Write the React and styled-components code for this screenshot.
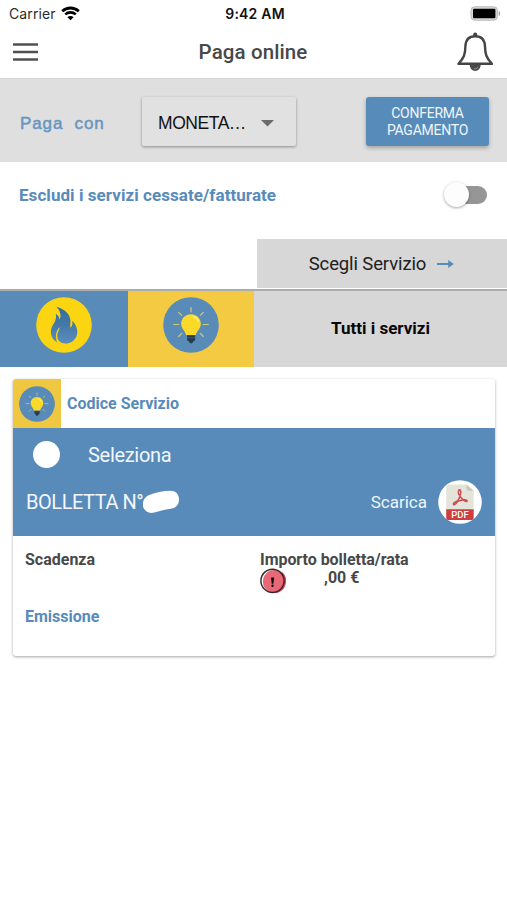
import { useState } from "react";
import styled, { createGlobalStyle } from "styled-components";

const GlobalStyle = createGlobalStyle`
  * {
    box-sizing: border-box;
  }
  body {
    margin: 0;
    background: #fff;
    font-family: Roboto, sans-serif;
  }
  button {
    border: none;
    padding: 0;
    background: none;
    font-family: inherit;
    cursor: pointer;
  }
  svg {
    display: block;
  }
`;

const Page = styled.div`
  width: 507px;
  height: 900px;
  overflow: hidden;
  background: #fff;
`;
const Label = styled.span`
  font-family: ${(p) => p.$font || "Roboto"}, sans-serif;
  font-size: ${(p) => p.$size}px;
  font-weight: ${(p) => p.$weight || 400};
  color: ${(p) => p.$color || "#484848"};
  letter-spacing: ${(p) => p.$spacing || 0}px;
  line-height: 20px;
  white-space: pre;
`;

const StatusBar = styled.div`
  display: grid;
  grid-template-columns: 1fr auto 1fr;
  align-items: center;
  height: 27px;
  padding: 0 6px 0 9px;
`;
const Carrier = styled.div`
  display: flex;
  align-items: center;
  gap: 5px;
`;
const BatterySlot = styled.div`
  display: flex;
  justify-content: flex-end;
`;

const Header = styled.header`
  display: grid;
  grid-template-columns: 1fr auto 1fr;
  align-items: center;
  height: 51px;
  padding: 0 14px 2px 13px;
`;
const BellButton = styled.button`
  justify-self: end;
`;

const PayBar = styled.div`
  display: flex;
  align-items: center;
  height: 84px;
  padding: 2px 18px 0 20px;
  background: #dfdfdf;
  border-top: 1px solid #d6d6d6;
`;
const PayLabel = styled.div`
  width: 122px;
  padding-top: 4px;
  -webkit-text-stroke: 0.5px #6796c3;
`;
const Select = styled.button`
  display: flex;
  align-items: center;
  justify-content: space-between;
  width: 154px;
  height: 49px;
  padding: 3px 22px 0 16px;
  border-radius: 2px;
  background: #e1e1e1;
  box-shadow: 0 1px 3px rgba(0, 0, 0, 0.38);
`;
const ConfirmButton = styled.button`
  width: 123px;
  height: 49px;
  margin-left: auto;
  border-radius: 3px;
  background: #578bba;
  color: #f0f6fc;
  font-size: 14px;
  line-height: 17px;
  letter-spacing: -0.25px;
  box-shadow: 0 2px 4px rgba(0, 0, 0, 0.28);
`;

const FilterRow = styled.div`
  display: flex;
  align-items: center;
  justify-content: space-between;
  height: 77px;
  padding: 0 20px 12px 19px;
`;
const Toggle = styled.button`
  display: flex;
  align-items: center;
  justify-content: ${(p) => (p.$on ? "flex-end" : "flex-start")};
  width: 43px;
  height: 18px;
  border-radius: 9px;
  background: linear-gradient(90deg, transparent 12px, #969696 12px);
`;
const Knob = styled.span`
  flex: none;
  width: 25px;
  height: 25px;
  border-radius: 50%;
  background: #fdfdfd;
  box-shadow: 0 1px 3px rgba(0, 0, 0, 0.35);
`;

const ChooseService = styled.button`
  display: flex;
  align-items: center;
  justify-content: center;
  gap: 11px;
  width: 250px;
  height: 49px;
  margin-left: auto;
  padding-right: 1px;
  background: #d7d7d7;
`;
const Tabs = styled.div`
  display: grid;
  grid-template-columns: 128px 126px 1fr;
  height: 78px;
  margin-top: 1px;
  border-top: 2px solid #acacac;
`;
const Tab = styled.button`
  display: flex;
  align-items: center;
  justify-content: center;
  padding-bottom: ${(p) => (p.$icon ? 8 : 2)}px;
  background: ${(p) => p.$bg};
`;

const Card = styled.section`
  width: 482px;
  height: 277px;
  margin: 12px 0 0 13px;
  border-radius: 3px;
  background: #fff;
  box-shadow: 0 1px 3px rgba(0, 0, 0, 0.36);
  overflow: hidden;
`;
const CardHead = styled.div`
  display: flex;
  align-items: center;
  height: 49px;
  gap: 6px;
`;
const ServiceBadge = styled.div`
  display: flex;
  align-items: center;
  justify-content: center;
  width: 48px;
  height: 49px;
  background: #f0c741;
`;
const BillPanel = styled.div`
  height: 108px;
  padding: 13px 13px 0;
  background: #588bb9;
`;
const SelectRow = styled.div`
  display: flex;
  align-items: center;
  gap: 28px;
  height: 27px;
  padding-left: 7px;
`;
const Radio = styled.button`
  width: 27px;
  height: 27px;
  border-radius: 50%;
  background: ${(p) => (p.$checked ? "#f3c843" : "#fff")};
`;
const BillRow = styled.div`
  display: flex;
  align-items: center;
  justify-content: space-between;
  height: 46px;
  margin-top: 11px;
`;
const BillNumber = styled.div`
  display: flex;
  align-items: center;
`;
const Download = styled.button`
  display: flex;
  align-items: center;
  gap: 11px;
`;
const Details = styled.div`
  display: grid;
  grid-template-columns: 235px 1fr;
  grid-template-rows: 57px 20px;
  padding: 14px 12px;
`;
const Amount = styled.div`
  display: flex;
  flex-direction: column;
`;
const AmountRow = styled.div`
  display: flex;
  align-items: flex-start;
  gap: 36px;
  margin-top: -2px;
`;

const WifiIcon = () => (
  <svg width="19" height="15" viewBox="0 0 19 15" fill="none" stroke="#000">
    <path d="M1.2 5.2C5.9 .9 13.1 .9 17.8 5.2" strokeWidth="2.8" />
    <path d="M4.2 8.4c3-2.7 7.6-2.7 10.6 0" strokeWidth="2.6" />
    <path d="M9.5 14.2 6.4 11.2c1.8-1.6 4.4-1.6 6.2 0z" fill="#000" stroke="none" />
  </svg>
);

const BatteryIcon = () => (
  <svg width="31" height="15" viewBox="0 0 31 15">
    <rect x="1" y=".8" width="26.4" height="13.4" rx="3.6" fill="#d9d9d9" stroke="#b9b9b9" />
    <rect x="3" y="2.8" width="22.4" height="9.4" rx="1" fill="#000" />
    <path d="M28.7 5c2.2.6 2.2 4.4 0 5z" fill="#aaa" />
  </svg>
);

const MenuIcon = () => (
  <svg width="25" height="19" viewBox="0 0 25 19" stroke="#505050" strokeWidth="2.4">
    <path d="M0 2.5h25M0 10h25M0 17.5h25" />
  </svg>
);

const BellIcon = () => (
  <svg width="36" height="40" viewBox="0 0 36 40">
    <path d="M12.7 33h11a5.5 6 0 0 1-11 0z" fill="#4a4a4a" />
    <path d="M17 36.8c1.8.4 3.4-.5 4-1.9" fill="none" stroke="#aaa" strokeWidth=".8" />
    <circle cx="18.2" cy="2.7" r="2.1" fill="#454545" />
    <path
      d="M18.2 4.2C11.6 4.2 8.6 8.6 8.4 14.4C8.2 22.4 7.2 25.6 1.5 31.8H34.9C29.2 25.6 28.2 22.4 28 14.4C27.8 8.6 24.8 4.2 18.2 4.2z"
      fill="#fff"
      stroke="#454545"
      strokeWidth="2.4"
      strokeLinejoin="round"
    />
  </svg>
);

const FlameIcon = () => (
  <svg width="56" height="56" viewBox="0 0 57 57">
    <defs>
      <linearGradient id="flame" x1="0" y1="0" x2="0" y2="1">
        <stop offset="0" stopColor="#356b9c" />
        <stop offset=".5" stopColor="#4479aa" />
        <stop offset="1" stopColor="#5a8ebe" />
      </linearGradient>
    </defs>
    <circle cx="28.5" cy="28.5" r="28.3" fill="#fbd512" />
    <path
      d="M20.7 10C29 12.2 35.3 18 35.1 24.5C35 27.4 34.4 29.4 35.3 31.2C37 29.5 37.7 27 36.7 24.2C40.6 27.5 42.7 33 41.8 38C40.5 44 35.4 48 29.7 47.4C24 47 21.2 43.6 21.7 38.5C22 35.3 23.8 33.7 24.1 30.7C20.3 34 19.2 40.5 21.6 46.4C16.8 43.5 14.1 38 15.5 32.6C16.8 27.2 21.7 24.4 20.1 17C22.5 18.6 23.7 20.5 24.1 23C26 19 24.8 14 20.7 10z"
      fill="url(#flame)"
    />
  </svg>
);

const BulbIcon = ({ size }) => (
  <svg width={size} height={size} viewBox="0 0 57 57">
    <circle cx="28.5" cy="28.5" r="28.3" fill="#588bb8" />
    <path
      d="M28.5 10.5v5M15.6 15.4l3.7 3.5M41.4 15.4l-3.7 3.5M10.5 28h6M40.5 28h6M15.6 40.5l4-4M41.4 40.5l-4-4"
      stroke="#d5ca73"
      strokeWidth="1.2"
    />
    <path d="M24.5 39h8.2v4.2c0 1.2-.9 1.5-1.9 1.8c0 2.8-4.4 2.8-4.4 0c-1-.3-1.9-.6-1.9-1.8z" fill="#263c50" />
    <path d="M24.5 41.4h8.2" stroke="#4c6070" strokeWidth=".8" />
    <path
      d="M28.5 17.5c-5.9 0-10 4.5-10 9.8c0 5 4.3 7.3 5 11.5h10c.7-4.2 5-6.5 5-11.5c0-5.3-4.1-9.8-10-9.8z"
      fill="#fbd929"
    />
    <path d="M30.5 20c3.1.7 5.1 2.9 5.5 5.6" fill="none" stroke="#ffe992" strokeWidth="1.5" />
  </svg>
);

const ArrowIcon = () => (
  <svg width="17" height="10" viewBox="0 0 17 10">
    <path d="M0 5h14" stroke="#588bb9" strokeWidth="2" />
    <path d="M11.5 1.5 16.3 5l-4.8 3.5z" fill="#588bb9" stroke="#588bb9" strokeWidth=".6" />
  </svg>
);

const CaretIcon = () => (
  <svg width="13" height="7" viewBox="0 0 13 7">
    <path d="M0 0h13L6.5 6.5z" fill="#6b6b6b" />
  </svg>
);

const Smudge = () => (
  <svg width="37" height="24" viewBox="0 0 37 24">
    <path
      d="M5 5.5C12 2.5 20 .8 28 .8C33 .8 36 4.5 36 9.5C36 14.5 33 18 28 18.8C21 19.5 16 21.6 10 22.8C5 23.6 1.5 21 0 16.5C-1 11.5 1.5 7.5 5 5.5z"
      fill="#fff"
    />
  </svg>
);

const PdfIcon = () => (
  <svg width="44" height="44" viewBox="0 0 44 44">
    <circle cx="22" cy="22" r="21.8" fill="#fff" />
    <path d="M8.2 6.5a2 2 0 0 1 2-2h18.3l7.2 6.3V30H8.2z" fill="#e5e4da" />
    <path d="M28.5 4.5v4.3a2 2 0 0 0 2 2h5.2z" fill="#c9c8bd" />
    <path d="M8.2 29.3h27.5V38a2 2 0 0 1-2 2H10.2a2 2 0 0 1-2-2z" fill="#cf3d40" />
    <g fill="none" stroke="#cc4b50" strokeWidth="1.5" strokeLinejoin="round">
      <path d="M22 16.5 19.6 21.2l5.6-1.4z" />
      <ellipse cx="21.6" cy="12.3" rx="1.2" ry="2.6" />
      <path d="M21.8 14.5v2.2" />
      <path d="M19.8 21c-1.2 2.1-3 4.1-4.2 3.5c-1-1 1.5-2.9 4.2-3.5z" />
      <path d="M25 19.8c2.2-.3 4.3.2 4.2 1.1c-.5 1.1-2.8.4-4.2-1.1z" />
    </g>
    <text
      x="22"
      y="38.3"
      textAnchor="middle"
      fontFamily="Roboto, sans-serif"
      fontSize="9.5"
      fontWeight="500"
      fill="#fff"
    >
      PDF
    </text>
  </svg>
);

const AlertIcon = () => (
  <svg width="28" height="27" viewBox="0 0 28 27">
    <circle cx="14.2" cy="13.4" r="11.3" fill="#e96877" />
    <path d="M21.5 4.8A11.4 11.4 0 0 1 16 24.2" fill="none" stroke="#e63c53" strokeWidth="2" />
    <circle cx="12.5" cy="12.8" r="11.6" fill="none" stroke="#352b2d" strokeWidth="1.5" />
    <path d="M11 9.5h3.2l-.8 6.2h-1.7z" fill="#111" />
    <circle cx="12.5" cy="17.7" r="1.2" fill="#111" />
  </svg>
);

const App = () => {
  const [excludeClosed, setExcludeClosed] = useState(false);
  const [selected, setSelected] = useState(false);

  return (
    <>
      <GlobalStyle />
      <Page>
        <StatusBar>
          <Carrier>
            <Label $font="Inter" $size={14} $color="#2c2c2c" $spacing={0.1}>Carrier</Label>
            <WifiIcon />
          </Carrier>
          <Label $font="Inter" $size={14} $weight={600} $color="#111" $spacing={0.2}>9:42 AM</Label>
          <BatterySlot>
            <BatteryIcon />
          </BatterySlot>
        </StatusBar>

        <Header>
          <MenuIcon />
          <Label $size={20.5} $weight={500} $spacing={0.1}>Paga online</Label>
          <BellButton>
            <BellIcon />
          </BellButton>
        </Header>

        <PayBar>
          <PayLabel>
            <Label $font="Liberation Sans" $size={17} $color="#6796c3" $spacing={0.9}>
              {"Paga  con"}
            </Label>
          </PayLabel>
          <Select>
            <Label $font="Liberation Sans" $size={17.5} $color="#111" $spacing={-0.45}>MONETA…</Label>
            <CaretIcon />
          </Select>
          <ConfirmButton>
            CONFERMA
            <br />
            PAGAMENTO
          </ConfirmButton>
        </PayBar>

        <FilterRow>
          <Label $size={17} $weight={700} $color="#588bbb" $spacing={0.06}>
            Escludi i servizi cessate/fatturate
          </Label>
          <Toggle $on={excludeClosed} onClick={() => setExcludeClosed(!excludeClosed)}>
            <Knob />
          </Toggle>
        </FilterRow>

        <ChooseService>
          <Label $size={18.5} $color="#202020" $spacing={-0.12}>Scegli Servizio</Label>
          <ArrowIcon />
        </ChooseService>
        <Tabs>
          <Tab $bg="#588bb8" $icon>
            <FlameIcon />
          </Tab>
          <Tab $bg="#f4ca43" $icon>
            <BulbIcon size={56} />
          </Tab>
          <Tab $bg="#d7d7d7">
            <Label $size={17} $weight={700} $color="#080808">Tutti i servizi</Label>
          </Tab>
        </Tabs>

        <Card>
          <CardHead>
            <ServiceBadge>
              <BulbIcon size={36} />
            </ServiceBadge>
            <Label $size={16} $weight={700} $color="#588bbb">Codice Servizio</Label>
          </CardHead>
          <BillPanel>
            <SelectRow>
              <Radio $checked={selected} onClick={() => setSelected(!selected)} />
              <Label $size={20} $color="#f3f8fd" $spacing={-0.3}>Seleziona</Label>
            </SelectRow>
            <BillRow>
              <BillNumber>
                <Label $size={20} $color="#f3f8fd" $spacing={-0.45}>BOLLETTA N°</Label>
                <Smudge />
              </BillNumber>
              <Download>
                <Label $size={17} $color="#edf5fc">Scarica</Label>
                <PdfIcon />
              </Download>
            </BillRow>
          </BillPanel>
          <Details>
            <Label $size={16} $weight={700}>Scadenza</Label>
            <Amount>
              <Label $size={16} $weight={700} $spacing={-0.05}>Importo bolletta/rata</Label>
              <AmountRow>
                <AlertIcon />
                <Label $size={16} $weight={700}>,00 €</Label>
              </AmountRow>
            </Amount>
            <Label $size={16} $weight={700} $color="#588bbb">Emissione</Label>
          </Details>
        </Card>
      </Page>
    </>
  );
};

export default App;
